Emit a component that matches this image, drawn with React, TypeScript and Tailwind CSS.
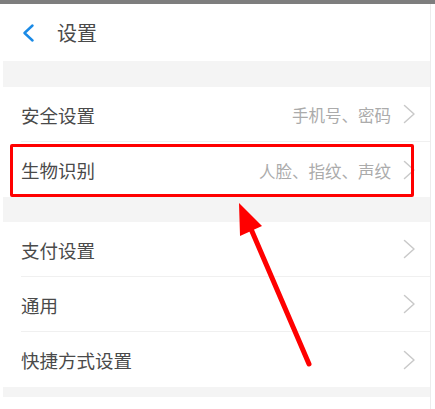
const font = { fontFamily: '"Noto Sans CJK SC", "Noto Sans", sans-serif' };

function Chevron() {
  return (
    <svg width="13" height="20" viewBox="0 0 13 20" className="shrink-0">
      <polyline points="1.5,1.5 11,10 1.5,18.5" fill="none" stroke="#c9c9c9" strokeWidth="1.5" strokeLinejoin="round" strokeLinecap="round" />
    </svg>
  );
}

function Row({ title, hint, divider = true }: { title: string; hint?: string; divider?: boolean }) {
  return (
    <div className="h-[55px] pl-[21px] flex">
      <div
        className={`flex-1 flex items-center justify-between pr-[14px] ${divider ? "border-b border-[#f0f0f0]" : ""}`}
      >
        <span className="text-[18.5px] text-[#4a4a4a] pt-[3px]">{title}</span>
        <div className="flex items-center gap-[12px]">
          {hint && <span className="text-[16.5px] text-[#ababab] pt-[3px]">{hint}</span>}
          <Chevron />
        </div>
      </div>
    </div>
  );
}

export default function App() {
  return (
    <div className="relative w-[435px] h-[409px] bg-white overflow-hidden" style={font}>
      <div className="h-[4px] bg-[#7e7e7e]" />
      <div className="w-[431px] border-r border-[#ececec] h-[405px] flex flex-col">
        <div className="h-[57px] flex items-center pl-[22px]">
          <svg width="13" height="18" viewBox="0 0 13 18">
            <polyline points="10.5,1.5 2.5,9 10.5,16.5" fill="none" stroke="#1a8ae6" strokeWidth="2.4" strokeLinejoin="round" strokeLinecap="round" />
          </svg>
          <span className="ml-[22px] text-[20px] text-[#4a4a4a]">设置</span>
        </div>
        <div className="h-[26px] bg-[#f4f4f4] ml-[3px]" />
        <Row title="安全设置" hint="手机号、密码" />
        <Row title="生物识别" hint="人脸、指纹、声纹" divider={false} />
        <div className="h-[25px] bg-[#f4f4f4] ml-[3px]" />
        <Row title="支付设置" />
        <Row title="通用" />
        <Row title="快捷方式设置" divider={false} />
        <div className="h-[10px] bg-[#f4f4f4] ml-[3px]" />
      </div>

      {/* annotation */}
      <div className="absolute left-[10px] top-[144px] w-[404px] h-[53px] border-[3px] border-[#ff0000] rounded-[2px]" />
      <svg className="absolute left-0 top-0" width="435" height="409" viewBox="0 0 435 409">
        <line x1="309" y1="364" x2="248" y2="222" stroke="#ff0000" strokeWidth="5" strokeLinecap="round" />
        <polygon points="239,203 240,236 262,226" fill="#ff0000" />
      </svg>
    </div>
  );
}
